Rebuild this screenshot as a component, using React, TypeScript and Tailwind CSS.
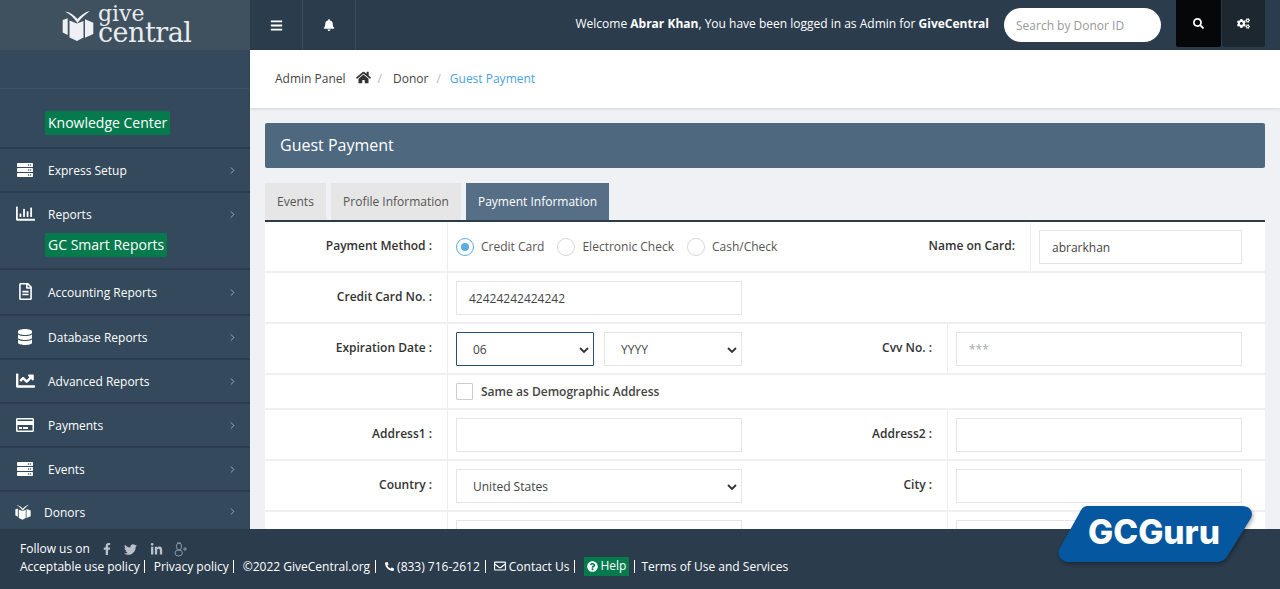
import React from "react";
import { ChevronRight } from "lucide-react";
import {
  FaBars,
  FaBell,
  FaChartLine,
  FaCogs,
  FaDatabase,
  FaFacebookF,
  FaHome,
  FaLinkedinIn,
  FaPhoneAlt,
  FaQuestionCircle,
  FaRegChartBar,
  FaRegCreditCard,
  FaRegEnvelope,
  FaRegFileAlt,
  FaSearch,
  FaServer,
  FaTwitter,
} from "react-icons/fa";

function GiftIcon({ className }: { className?: string }) {
  return (
    <svg viewBox="0 0 32 31" className={className} fill="currentColor">
      <path d="M3 1.5C8 2 12 5 15.5 9 19 5 23 2 28 1 24 4 19 8 15.5 13 12 8 8 4 3 1.5Z" />
      <path d="M.7 10l5-1.7V25l-5-2.5zM7.5 10.5l7.5 3 6.5-2.5v16.5L15 31l-7.5-3.5zM23 9.3l8.3 3.4V24L23 27.7z" />
    </svg>
  );
}

const menu = [
  { label: "Express Setup", icon: <FaServer className="text-[16px]" />, h: "h-[42px]" },
  { label: "Reports", icon: <FaRegChartBar className="text-[19px]" />, h: "h-[42px]", badge: "GC Smart Reports" },
  { label: "Accounting Reports", icon: <FaRegFileAlt className="text-[17px]" />, h: "h-[44px]" },
  { label: "Database Reports", icon: <FaDatabase className="text-[16px]" />, h: "h-[42px]" },
  { label: "Advanced Reports", icon: <FaChartLine className="text-[19px]" />, h: "h-[42px]" },
  { label: "Payments", icon: <FaRegCreditCard className="text-[18px]" />, h: "h-[42px]" },
  { label: "Events", icon: <FaServer className="text-[16px]" />, h: "h-[42px]" },
];

function Sidebar() {
  return (
    <aside className="flex w-[250px] shrink-0 flex-col overflow-hidden bg-[#34495b] text-white">
      <div className="flex h-[50px] shrink-0 items-center bg-[#3f505e] pl-[62px]">
        <GiftIcon className="h-[31px] w-[32px] text-[#eef0f4]" />
        <div className="ml-[4px] flex flex-col font-['DejaVu_Serif',serif] text-[#e9ecef]">
          <span className="h-[15px] text-[22px] leading-[17px]">give</span>
          <span className="text-[27px] leading-[26px] tracking-[-0.5px]">central</span>
        </div>
      </div>
      <div className="h-[39px] shrink-0 border-b border-[#3d5162]" />
      <div className="h-[60px] shrink-0 border-b-2 border-[#2b3c4d] pt-[22px] pl-[45px]">
        <span className="block w-fit rounded-[2px] bg-[#047a4d] px-[3px] py-[2px] text-[14px] leading-[20px]">Knowledge Center</span>
      </div>
      {menu.map((item) => (
        <div key={item.label} className="shrink-0 border-b-2 border-[#2b3c4d]">
          <div className={`flex items-center pt-[2px] ${item.h}`}>
            <span className="mb-[3px] flex w-[48px] shrink-0 justify-center pl-[2px]">{item.icon}</span>
            <span className="text-[12px]">{item.label}</span>
            <ChevronRight size={11} strokeWidth={1.5} className="mr-[12px] mb-[2px] ml-auto text-[#c9d1d8]" />
          </div>
          {item.badge && (
            <div className="h-[35px] pl-[45px]">
              <span className="-mt-[2px] block w-fit rounded-[2px] bg-[#047a4d] px-[3px] py-[2px] text-[14px] leading-[20px]">
                {item.badge}
              </span>
            </div>
          )}
        </div>
      ))}
      <div className="flex h-[38px] shrink-0 items-center pt-[3px]">
        <GiftIcon className="mb-[2px] ml-[15px] h-[16px] w-[16px]" />
        <span className="ml-[13px] text-[12px]">Donors</span>
        <ChevronRight size={11} strokeWidth={1.5} className="mr-[12px] mb-[2px] ml-auto text-[#c9d1d8]" />
      </div>
    </aside>
  );
}

function Header() {
  return (
    <header className="flex h-[50px] shrink-0 items-stretch bg-[#2b3c4d] text-white">
      <div className="flex w-[53px] items-center justify-center border-r border-[#3a4d5f]">
        <FaBars className="text-[13px]" />
      </div>
      <div className="flex w-[53px] items-center justify-center border-r border-[#3a4d5f]">
        <FaBell className="text-[12px]" />
      </div>
      <p className="mt-[15px] ml-auto text-[12px] leading-[18px]">
        Welcome <b>Abrar Khan</b>, You have been logged in as Admin for <b>GiveCentral</b>
      </p>
      <div className="mt-[8px] ml-[15px] flex h-[34px] w-[157px] items-center rounded-full bg-white pt-[2px] pl-[12px] text-[12px] text-[#999]">
        Search by Donor ID
      </div>
      <div className="ml-[15px] flex h-[47px] w-[45px] items-center justify-center rounded-b-[2px] bg-[#050708]">
        <FaSearch className="text-[11px]" />
      </div>
      <div className="mr-[15px] ml-[1px] flex h-[47px] w-[43px] items-center justify-center rounded-b-[2px] bg-[#1c2730]">
        <FaCogs className="text-[13px]" />
      </div>
    </header>
  );
}

function Label({ children }: { children?: React.ReactNode }) {
  return (
    <div className="w-[183px] shrink-0 border-r border-[#eceef1] pt-[15px] pr-[15px] text-right text-[12px] leading-[18px] font-semibold text-[#333]">
      {children}
    </div>
  );
}

// middle cell: left control plus the right column's label, closed by a divider
function Middle({ children, label }: { children?: React.ReactNode; label?: string }) {
  return (
    <div className={`flex min-w-0 flex-1 justify-between ${label ? "border-r border-[#eceef1]" : ""}`}>
      {children}
      {label && (
        <span className="shrink-0 pt-[15px] pr-[15px] text-[12px] leading-[18px] font-semibold whitespace-nowrap text-[#333]">
          {label}
        </span>
      )}
    </div>
  );
}

function Field({ value, muted, width = "w-[286px]" }: { value?: string; muted?: boolean; width?: string }) {
  return (
    <div className={`flex h-[34px] items-center border border-[#e3e5e8] bg-white pt-[1px] pl-[12px] text-[12px] ${muted ? "text-[#aaa]" : "text-[#444]"} ${width}`}>
      {value}
    </div>
  );
}

function Select({ value, width, focused }: { value: string; width: string; focused?: boolean }) {
  return (
    <div className={`flex h-[34px] items-center border bg-white pt-[1px] pl-[16px] text-[12px] text-[#444] ${width} ${focused ? "rounded-[1px] border-[#2b4d6e]" : "border-[#e3e5e8]"}`}>
      {value}
      <svg viewBox="0 0 10 6" className="mr-[4px] ml-auto h-[6px] w-[10px]" fill="none" stroke="#333" strokeWidth="1.8">
        <path d="M1 1l4 4 4-4" />
      </svg>
    </div>
  );
}

function Radio({ label, checked }: { label: string; checked?: boolean }) {
  return (
    <div className="flex items-center">
      <span className={`flex h-[18px] w-[18px] items-center justify-center rounded-full border ${checked ? "border-[#5dade2]" : "border-[#d5d7d9]"}`}>
        {checked && <span className="h-[8px] w-[8px] rounded-full bg-[#5dade2]" />}
      </span>
      <span className="ml-[7px] text-[12px] text-[#555]">{label}</span>
    </div>
  );
}

function Row({ children, h = "h-[51px]" }: { children: React.ReactNode; h?: string }) {
  return <div className={`flex border-b-2 border-[#eff0f3] ${h}`}>{children}</div>;
}

function InputCell({ children }: { children: React.ReactNode }) {
  return <div className="flex items-start gap-[10px] pt-[8px] pl-[8px]">{children}</div>;
}

function GuestForm() {
  return (
    <div className="border-t-2 border-[#2b3c4d] bg-white">
      <Row>
        <Label>Payment Method :</Label>
        <Middle label="Name on Card:">
          <div className="flex items-center gap-[13px] pl-[8px]">
            <Radio label="Credit Card" checked />
            <Radio label="Electronic Check" />
            <Radio label="Cash/Check" />
          </div>
        </Middle>
        <div className="w-[234px] shrink-0">
          <InputCell>
            <Field value="abrarkhan" width="w-[203px]" />
          </InputCell>
        </div>
      </Row>
      <Row>
        <Label>Credit Card No. :</Label>
        <InputCell>
          <Field value="42424242424242" />
        </InputCell>
      </Row>
      <Row>
        <Label>Expiration Date :</Label>
        <Middle label="Cvv No. :">
          <InputCell>
            <Select value="06" width="w-[138px]" focused />
            <Select value="YYYY" width="w-[138px]" />
          </InputCell>
        </Middle>
        <div className="w-[317px] shrink-0">
          <InputCell>
            <Field value="***" muted />
          </InputCell>
        </div>
      </Row>
      <Row h="h-[35px]">
        <div className="w-[183px] shrink-0 border-r border-[#eceef1]" />
        <div className="flex items-center pl-[8px]">
          <span className="h-[17px] w-[17px] rounded-[1px] border border-[#ccc]" />
          <span className="ml-[8px] text-[12px] font-semibold text-[#444]">Same as Demographic Address</span>
        </div>
      </Row>
      <Row>
        <Label>Address1 :</Label>
        <Middle label="Address2 :">
          <InputCell>
            <Field />
          </InputCell>
        </Middle>
        <div className="w-[317px] shrink-0">
          <InputCell>
            <Field />
          </InputCell>
        </div>
      </Row>
      <Row>
        <Label>Country :</Label>
        <Middle label="City :">
          <InputCell>
            <Select value="United States" width="w-[286px]" />
          </InputCell>
        </Middle>
        <div className="w-[317px] shrink-0">
          <InputCell>
            <Field />
          </InputCell>
        </div>
      </Row>
      <Row>
        <Label />
        <Middle label=" ">
          <InputCell>
            <Field />
          </InputCell>
        </Middle>
        <div className="w-[317px] shrink-0">
          <InputCell>
            <Field />
          </InputCell>
        </div>
      </Row>
    </div>
  );
}

function Sep({ children, className }: { children: React.ReactNode; className: string }) {
  return <span className={`flex items-center border-r border-white leading-[13px] ${className}`}>{children}</span>;
}

export default function App() {
  return (
    <div className="relative flex h-screen w-full flex-col overflow-hidden bg-[#f0f1f5] font-['Open_Sans',sans-serif]">
      <div className="flex min-h-0 flex-1">
        <Sidebar />
        <div className="flex min-w-0 flex-1 flex-col">
          <Header />
          <div className="flex h-[58px] shrink-0 items-center bg-white pl-[25px] text-[12px] text-[#444] shadow-[0_1px_3px_rgba(0,0,0,0.12)]">
            <span>Admin Panel</span>
            <FaHome className="mb-[3px] ml-[10px] text-[15px] text-[#333]" />
            <span className="mr-[11px] ml-[7px] text-[#bbb]">/</span>
            <span>Donor</span>
            <span className="mr-[9px] ml-[8px] text-[#bbb]">/</span>
            <span className="text-[#4aa3e0]">Guest Payment</span>
          </div>
          <div className="min-h-0 flex-1 overflow-hidden px-[15px] pt-[15px]">
            <div className="flex h-[45px] items-center rounded-[2px] bg-[#4e6880] pb-[2px] pl-[15px] text-[16px] text-white">
              Guest Payment
            </div>
            <div className="mt-[15px] flex h-[37px] gap-[5px] text-[12px]">
              <div className="flex w-[61px] items-center justify-center bg-[#e6e6e6] text-[#555]">Events</div>
              <div className="flex w-[130px] items-center justify-center bg-[#e6e6e6] text-[#555]">Profile Information</div>
              <div className="flex w-[143px] items-center justify-center bg-[#566f87] text-white">Payment Information</div>
            </div>
            <GuestForm />
          </div>
        </div>
      </div>
      <footer className="h-[60px] shrink-0 bg-[#2b3c4d] pt-[11px] pl-[20px] text-[12px] leading-[18px] text-white">
        <div className="flex h-[18px] items-center">
          <span>Follow us on</span>
          <FaFacebookF className="ml-[11px] text-[12px] text-[#b8c1c9]" />
          <FaTwitter className="ml-[11px] text-[13px] text-[#b8c1c9]" />
          <FaLinkedinIn className="ml-[13px] text-[13px] text-[#b8c1c9]" />
          <svg viewBox="0 0 14 15" className="ml-[11px] h-[15px] w-[14px]" fill="none" stroke="#8d99a4" strokeWidth="1">
            <ellipse cx="5" cy="4.5" rx="2.6" ry="3.5" />
            <ellipse cx="4.7" cy="11" rx="3.7" ry="3" />
            <path d="M7 1H3M11 5v4M9 7h4" />
          </svg>
        </div>
        <div className="-mt-[1px] flex h-[18px] items-center">
          <Sep className="pr-[4px]">Acceptable use policy</Sep>
          <Sep className="ml-[9px] pr-[4px]">Privacy policy</Sep>
          <Sep className="ml-[9px] pr-[5px]">©2022 GiveCentral.org</Sep>
          <Sep className="ml-[9px] pr-[5px]">
            <FaPhoneAlt className="mr-[3px] text-[9px]" />
            (833) 716-2612
          </Sep>
          <Sep className="ml-[8px] pr-[5px]">
            <FaRegEnvelope className="mr-[3px] text-[12px]" />
            Contact Us
          </Sep>
          <span className="ml-[9px] flex h-[19px] items-center bg-[#047a4d] px-[3px]">
            <FaQuestionCircle className="mr-[2px] text-[11px]" />
            Help
          </span>
          <span className="ml-[5px] border-l border-white pl-[6px] leading-[13px]">Terms of Use and Services</span>
        </div>
      </footer>
      <div className="absolute top-[506px] left-[1058px] flex h-[56px] w-[195px] items-center justify-center">
        <svg viewBox="0 0 195 56" className="absolute inset-0 h-full w-full drop-shadow-[1px_2px_2px_rgba(0,0,0,0.35)]" fill="#05589f">
          <path d="M30 0H184C192 0 196 6 193 12L170 49C167 54 163 56 158 56H12C3 56-2 49 2 42L22 6C24 2 26 0 30 0Z" />
        </svg>
        <span className="relative mb-[3px] -ml-[3px] font-['Inter',sans-serif] text-[33.5px] leading-none font-extrabold text-white">
          GCGuru
        </span>
      </div>
    </div>
  );
}
